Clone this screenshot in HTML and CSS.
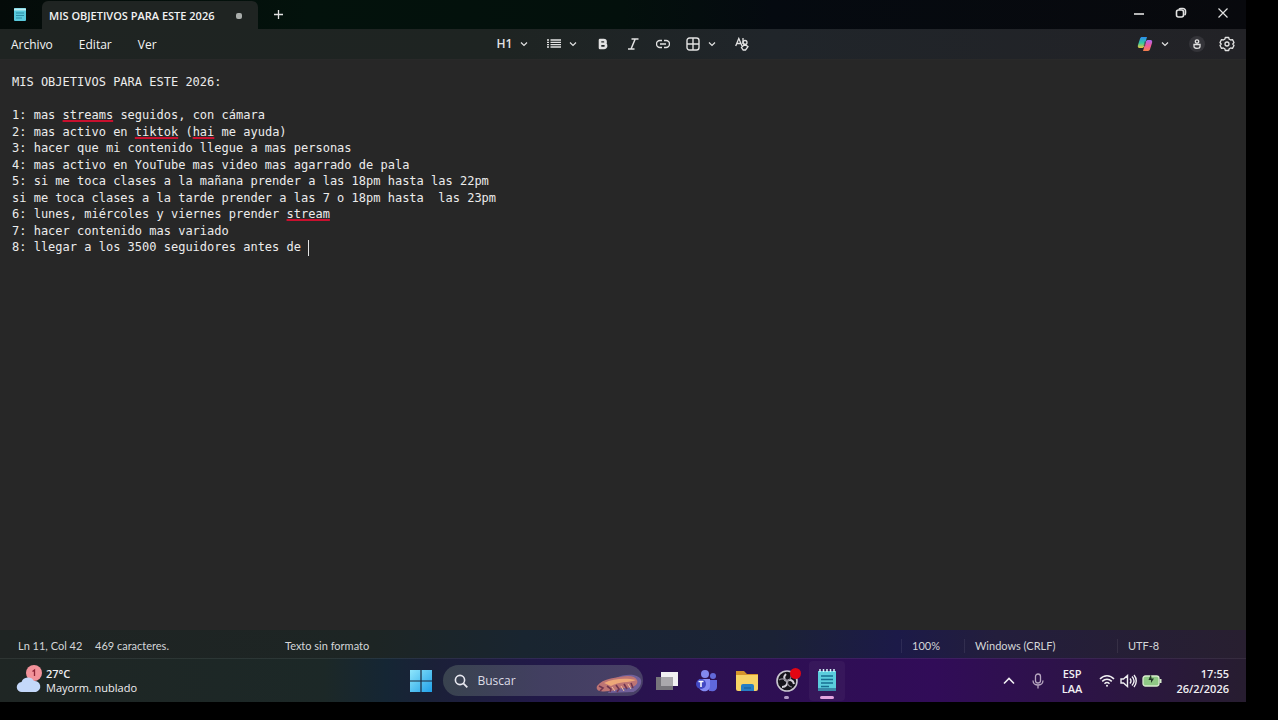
FILE: index.html
```html
<!DOCTYPE html>
<html lang="es">
<head>
<meta charset="utf-8">
<meta name="viewport" content="width=device-width, initial-scale=1">
<title>MIS OBJETIVOS PARA ESTE 2026</title>
<link rel="stylesheet" href="styles.css">
</head>
<body>
<svg class="defs" aria-hidden="true">
  <symbol id="chevron" viewBox="0 0 8 8"><path d="M1 2.5 4 5.5 7 2.5" fill="none" stroke="currentColor" stroke-width="1.200"/></symbol>
  <linearGradient id="win" x1="0" y1="0" x2="1" y2="1"><stop offset="0" stop-color="#8fe6fb"/><stop offset="1" stop-color="#1fa0e8"/></linearGradient>
  <linearGradient id="copilotA" x1="0" y1="0" x2="0" y2="1"><stop offset="0" stop-color="#2b8cf0"/><stop offset=".55" stop-color="#35c9a0"/><stop offset="1" stop-color="#f0c63c"/></linearGradient>
  <linearGradient id="copilotB" x1="0" y1="0" x2="0" y2="1"><stop offset="0" stop-color="#a968f0"/><stop offset=".5" stop-color="#f05a9c"/><stop offset="1" stop-color="#f4804a"/></linearGradient>
</svg>

<main class="window">
  <header class="titlebar">
    <svg class="app-icon" width="14" height="16" viewBox="0 0 14 16"><rect x="1" y="1" width="12" height="13" rx="1" fill="#59c9dc"/><path d="M1 1.500h12v2H1z" fill="#b9eef5"/><path d="M3 6h8M3 8.500h8M3 11h6" stroke="#2c8da6"/></svg>
    <div class="tab"><span>MIS OBJETIVOS PARA ESTE 2026</span><i class="unsaved"></i></div>
    <button class="icon-btn new-tab" aria-label="Nueva pestaña"><svg width="11" height="11" viewBox="0 0 11 11"><path d="M5.500 1v9M1 5.500h9" stroke="currentColor" stroke-width="1.300"/></svg></button>
    <div class="caption">
      <button class="icon-btn" aria-label="Minimizar"><svg width="12" height="12" viewBox="0 0 12 12"><path d="M1 7h10" stroke="currentColor" stroke-width="1.600"/></svg></button>
      <button class="icon-btn" aria-label="Restaurar"><svg width="12" height="12" viewBox="0 0 12 12" fill="none" stroke="currentColor" stroke-width="1.600"><rect x="1.500" y="3" width="7" height="7" rx="2"/><path d="M4 2.500C4.500 1.600 5 1.500 6 1.500h2A2.500 2.500 0 0 1 10.500 4v2c0 1-.1 1.500-1 2"/></svg></button>
      <button class="icon-btn" aria-label="Cerrar"><svg width="12" height="12" viewBox="0 0 12 12"><path d="M1.500 1.500l9 9M10.500 1.500l-9 9" stroke="currentColor" stroke-width="1.200"/></svg></button>
    </div>
  </header>

  <nav class="menubar">
    <div class="menus">
      <button>Archivo</button><button>Editar</button><button>Ver</button>
    </div>
    <div class="tools">
      <button class="split" aria-label="Encabezados"><span class="h1">H1</span><svg width="8" height="8"><use href="#chevron"/></svg></button>
      <button class="split" aria-label="Listas"><svg width="14" height="12" viewBox="0 0 14 12"><path d="M0 2h2M0 4.300h2M0 6.700h2M0 9h2M3.500 2H14M3.500 4.300H14M3.500 6.700H14M3.500 9H14" stroke="currentColor" stroke-width="1.300"/></svg><svg width="8" height="8"><use href="#chevron"/></svg></button>
      <button aria-label="Negrita"><svg width="14" height="14" viewBox="0 0 14 14"><path d="M4 3v8h4a2.100 2.100 0 0 0 0-4.200H4h3.700a1.900 1.900 0 0 0 0-3.800z" fill="none" stroke="currentColor" stroke-width="2.600" stroke-linejoin="round"/></svg></button>
      <button aria-label="Cursiva"><svg width="14" height="14" viewBox="0 0 14 14"><path d="M5.500 2H12.500M2 12h6.500M9.200 2 5 12" fill="none" stroke="currentColor" stroke-width="1.500"/></svg></button>
      <button aria-label="Vínculo"><svg width="14" height="10" viewBox="0 0 14 10"><path d="M6 1.500H4a3.500 3.500 0 0 0 0 7h2M8 1.500h2a3.500 3.500 0 0 1 0 7H8M4 5h6" fill="none" stroke="currentColor" stroke-width="1.400"/></svg></button>
      <button class="split" aria-label="Tabla"><svg width="14" height="14" viewBox="0 0 14 14"><rect x="1" y="1" width="12" height="12" rx="2.500" fill="none" stroke="currentColor" stroke-width="1.400"/><path d="M7 1v12M1 7h12" stroke="currentColor" stroke-width="1.400"/></svg><svg width="8" height="8"><use href="#chevron"/></svg></button>
      <button aria-label="Borrar formato"><svg width="14" height="14" viewBox="0 0 14 14" fill="none" stroke="currentColor" stroke-width="1.300"><path d="M.7 9 3.800 1.500 7 9M2 6.500h4M8 1v6"/><circle cx="10" cy="5.500" r="2"/><path d="m6.500 10.500 3.200-3.300 3.300 2.500-2.500 3.300H8.200z"/></svg></button>
    </div>
    <div class="right-tools">
      <button class="split" aria-label="Copilot"><svg width="16" height="16" viewBox="0 0 16 16"><path d="M5 1h5L7.500 9.500C7 11.500 6 12 4.500 12H2.600C.8 12 .5 10.500 1 9L3 2.700C3.400 1.500 4 1 5 1z" fill="url(#copilotA)"/><path d="M11 15H6l2.500-8.500C9 4.500 10 4 11.500 4h1.900c1.800 0 2.100 1.500 1.600 3l-2 6.300c-.4 1.200-1 1.700-2 1.700z" fill="url(#copilotB)"/><path d="M7.500 5.500H9L8.200 10H6.500z" fill="#272a33" opacity=".5"/></svg><svg width="8" height="8"><use href="#chevron"/></svg></button>
      <button class="account" aria-label="Cuenta"><svg width="10" height="12" viewBox="0 0 10 12" fill="none" stroke="currentColor" stroke-width="1.300"><circle cx="5" cy="3.500" r="1.700"/><path d="M2 6.500h6v2c0 2.500-6 2.500-6 0z"/></svg></button>
      <button aria-label="Configuración"><svg width="16" height="16" viewBox="0 0 16 16" fill="none" stroke="currentColor" stroke-width="1.300" stroke-linejoin="round"><path d="m6.300 1.500-.5 1.700-1.500.8-1.800-.4L1 6.500 2.200 8 1 9.500l1.500 2.900 1.800-.4 1.500.8.500 1.700h3.400l.5-1.700 1.500-.8 1.800.4L15 9.500 13.800 8 15 6.500l-1.500-2.900-1.800.4-1.500-.8-.5-1.700z"/><circle cx="8" cy="8" r="2"/></svg></button>
    </div>
  </nav>

  <section class="editor" contenteditable="true" role="textbox" aria-multiline="true" aria-label="Editor de texto" spellcheck="false">
    <p>MIS OBJETIVOS PARA ESTE 2026:</p>
    <p><br></p>
    <p>1: mas <span class="typo">streams</span> seguidos, con cámara</p>
    <p>2: mas activo en <span class="typo">tiktok</span> (<span class="typo">hai</span> me ayuda)</p>
    <p>3: hacer que mi contenido llegue a mas personas</p>
    <p>4: mas activo en YouTube mas video mas agarrado de pala</p>
    <p>5: si me toca clases a la mañana prender a las 18pm hasta las 22pm</p>
    <p>si me toca clases a la tarde prender a las 7 o 18pm hasta  las 23pm</p>
    <p>6: lunes, miércoles y viernes prender <span class="typo">stream</span></p>
    <p>7: hacer contenido mas variado</p>
    <p>8: llegar a los 3500 seguidores antes de <span class="cursor"></span></p>
  </section>

  <footer class="status">
    <span class="position">Ln 11, Col 42</span>
    <span class="count">469 caracteres.</span>
    <span class="format">Texto sin formato</span>
    <span class="cell zoom">100%</span>
    <span class="cell eol">Windows (CRLF)</span>
    <span class="cell encoding">UTF-8</span>
  </footer>
</main>

<footer class="taskbar">
  <button class="weather">
    <svg width="28" height="30" viewBox="0 0 28 30"><circle cx="19" cy="9" r="8" fill="#f2929a"/><path d="M7 28a5 5 0 0 1-.5-10A7 7 0 0 1 19 17a5.600 5.600 0 0 1 2 11z" fill="#c4d8fa"/><path d="M17.500 7.500 19.500 6v6" fill="none" stroke="#8d2436" stroke-width="1.300"/></svg>
    <span><b>27°C</b>Mayorm. nublado</span>
  </button>
  <div class="apps">
    <button class="app" aria-label="Inicio"><svg width="22" height="22" viewBox="0 0 22 22" fill="url(#win)"><path d="M0 0h10.400v10.400H0zM11.600 0H22v10.400H11.600zM0 11.600h10.400V22H0zM11.600 11.600H22V22H11.600z"/></svg></button>
    <label class="search">
      <svg width="14" height="14" viewBox="0 0 14 14"><circle cx="6" cy="6" r="4.600" fill="none" stroke="#e8e8f0" stroke-width="1.600"/><path d="m9.300 9.300 4 4" stroke="#e8e8f0" stroke-width="1.800"/></svg>
      <input type="text" placeholder="Buscar" aria-label="Buscar">
      <svg width="46" height="20" viewBox="0 0 46 20"><path d="M20 4C28 0 42-1 45 6c1 5-3 10-8 12L12 19z" fill="#71609a"/><path d="M1 12C8 4 18 4 24 3c9-2 15-1 17 3 2 5-4 8-12 8-7 0-9 3-15 3C7 18-1 18 1 12z" fill="#bd7474"/><path d="M8 9C18 4 31 4 40 6c-7 3-17 1-25 6z" fill="#eda878"/><path d="M3 12l4 2-3 3M11 12l4 3-1 3M20 11l3 4-2 3M28 10l3 5M35 9l2 5" stroke="#6f3650" stroke-width="1.600" fill="none"/><path d="M16 13l3 4M25 12l3 5M32 10l3 5" stroke="#f0bd9e" fill="none"/></svg>
    </label>
    <button class="app" aria-label="Vista de tareas"><svg width="24" height="22" viewBox="0 0 24 22"><path d="M1 7h17v13H1z" fill="#77757b"/><path d="M6 2h17v14H6z" fill="#f1f0f2"/><path d="M6 7h12v9H6z" fill="#aaa8ac"/></svg></button>
    <button class="app" aria-label="Teams"><svg width="24" height="24" viewBox="0 0 24 24"><circle cx="10" cy="5" r="4" fill="#8288ee"/><circle cx="18" cy="7" r="3" fill="#6269d8"/><path d="M14 11h8v7c0 3-3 5-6 4h-2z" fill="#6068dc"/><path d="M4 10h11v7c0 7-11 7-11 0z" fill="#858cf4"/><circle cx="6" cy="15" r="5" fill="#4148c2"/><path d="M3.500 12.500h5M6 12.500V18" stroke="#fff" stroke-width="1.500"/></svg></button>
    <button class="app" aria-label="Explorador de archivos"><svg width="24" height="22" viewBox="0 0 24 22"><path d="M1 1h8l3 3h11v8H1z" fill="#d6952b"/><path d="M1 5h22v14a2 2 0 0 1-2 2H3a2 2 0 0 1-2-2z" fill="#f7d365"/><path d="M6 21v-5a2 2 0 0 1 2-2h9a2 2 0 0 1 2 2v5z" fill="#267ec4"/><path d="M9 18h7" stroke="#145892"/></svg></button>
    <button class="app running" aria-label="OBS Studio"><svg width="28" height="26" viewBox="0 0 28 26"><circle cx="14" cy="13" r="10" fill="#15131b" stroke="#c9c6d1" stroke-width="1.600"/><path d="M14 13c-3-1-4-4-1-7M14 13c3-2 6-1 7 3M14 13c1 3-1 6-5 6" fill="none" stroke="#d4d1da" stroke-width="2"/><path d="M6 12c3-2 6-1 8 1M18 6c1 3-1 6-4 7M19 19c-3 0-5-3-5-6" fill="none" stroke="#8c8894" stroke-width="1.200"/><circle cx="22.500" cy="5.500" r="5.500" fill="#e30613"/></svg></button>
    <button class="app running active" aria-label="Bloc de notas"><svg width="20" height="24" viewBox="0 0 20 24"><path d="M1 2h18v19a1 1 0 0 1-1 1H2a1 1 0 0 1-1-1z" fill="#5bcddd"/><path d="M1 19h18v3H1z" fill="#398aa9"/><path d="M3 0v3M6.500 0v3M10 0v3M13.500 0v3M17 0v3" stroke="#d7f6fa" stroke-width="1.500"/><path d="M4 7h12M4 10.500h12M4 14h12M4 17.500h8" stroke="#176f91" stroke-width="1.500"/></svg></button>
  </div>
  <div class="tray">
    <button aria-label="Iconos ocultos"><svg width="12" height="8" viewBox="0 0 12 8"><path d="m1 6.500 5-5 5 5" fill="none" stroke="currentColor" stroke-width="1.600"/></svg></button>
    <button class="mic" aria-label="Micrófono"><svg width="12" height="16" viewBox="0 0 12 16" fill="none" stroke="currentColor" stroke-width="1.300"><rect x="3.500" y="1" width="5" height="9" rx="2.500"/><path d="M1 7.500c0 6 10 6 10 0M6 12v3.500"/></svg></button>
    <button class="lang">ESP<br>LAA</button>
    <button class="system" aria-label="Red, volumen y batería">
      <svg width="16" height="14" viewBox="0 0 16 14" fill="none" stroke="currentColor" stroke-width="1.500"><path d="M1 5c4-4.500 10-4.500 14 0M3.200 7.400c3-3 6.600-3 9.600 0M5.500 9.700c1.600-1.600 3.400-1.600 5 0"/><circle cx="8" cy="11.800" r="1" fill="currentColor" stroke="none"/></svg>
      <svg width="17" height="14" viewBox="0 0 17 14" fill="none" stroke="currentColor" stroke-width="1.400"><path d="M1 5h2.500L7.500 1.500v11L3.500 9H1zM10 4.500c1.300 1.600 1.300 3.400 0 5M12 2.500c2.500 2.700 2.500 6.300 0 9M14 1c3 3.500 3 8.500 0 12"/></svg>
      <svg width="20" height="14" viewBox="0 0 20 14"><rect x="1" y="2" width="16" height="10" rx="2.500" fill="#8fc985" stroke="#d8edce" stroke-width="1.300"/><path d="M18.500 5v4" stroke="#d8edce" stroke-width="2"/><path d="M9 0 6.500 6H9v3l3-4.500H9.500z" fill="#223a26"/></svg>
    </button>
    <button class="clock">17:55<br>26/2/2026</button>
  </div>
</footer>
</body>
</html>
```
FILE: styles.css
```css
* { box-sizing: border-box; }

body {
  margin: 0;
  padding: 0 32px 18px 0;
  height: 100vh;
  display: flex;
  flex-direction: column;
  background: #000;
  color: #e2e2e2;
  font: 11px/14px "Open Sans", "Noto Sans", sans-serif;
}

button {
  display: flex;
  align-items: center;
  justify-content: center;
  margin: 0;
  padding: 0;
  border: 0;
  background: none;
  color: inherit;
  font: inherit;
}

svg { display: block; flex: none; }
.defs { position: absolute; width: 0; height: 0; }

.window {
  flex: 1;
  min-height: 0;
  display: flex;
  flex-direction: column;
  background: #272727;
}

/* Title bar */
.titlebar {
  display: flex;
  align-items: center;
  height: 29px;
  padding-left: 13px;
  background: linear-gradient(90deg, #040b09, #03120c 25%, #03100c 50%, #050a10 62%, #08090d);
}

.tab {
  align-self: flex-end;
  display: flex;
  align-items: center;
  gap: 22px;
  height: 28px;
  margin-left: 15px;
  padding: 2px 16px 0 7px;
  border-radius: 6px 6px 0 0;
  background: #1f2422;
  color: #f2f2f2;
  font-weight: 600;
}

.unsaved {
  width: 6px;
  height: 6px;
  border-radius: 2px;
  background: #a9adab;
}

.icon-btn { width: 42px; height: 28px; }
.new-tab { width: 40px; }
.caption { display: flex; align-self: flex-start; margin-left: auto; padding-right: 2px; }
.caption .icon-btn { height: 26px; }

/* Menus and formatting tools */
.menubar {
  display: grid;
  grid-template-columns: 1fr auto 1fr;
  align-items: center;
  height: 31px;
  border-bottom: 1px solid #292929;
  background: linear-gradient(90deg, #1f2422, #1e2422 40%, #20252a 62%, #222226);
}

.menus {
  display: flex;
  gap: 26px;
  padding: 2px 0 0 11px;
  color: #f4f4f4;
  font-size: 12px;
}

.tools, .right-tools { display: flex; align-items: center; }
.tools { gap: 16px; }
.right-tools { justify-content: flex-end; gap: 14px; padding-right: 11px; }
.split { gap: 8px; }
.tools .split { margin-right: 3px; }
.right-tools .split { margin-right: 6px; }
.h1 { font-size: 12px; font-weight: 600; }
.account {
  width: 16px;
  height: 16px;
  border-radius: 50%;
  background: #343439;
}

/* Text area */
.editor {
  flex: 1;
  min-height: 0;
  display: flex;
  flex-direction: column;
  padding: 14px 12px;
  overflow: hidden;
  outline: 0;
  color: #ececec;
  font: 12px/16px "DejaVu Sans Mono", "Liberation Mono", monospace;
  white-space: pre-wrap;
}

.editor p { margin: 0; }
.editor p:nth-child(odd) { line-height: 17px; }

.typo {
  text-decoration: underline 2px #c8102e;
  text-underline-offset: 1px;
  text-decoration-skip-ink: none;
}

.cursor {
  display: inline-block;
  width: 1px;
  height: 16px;
  background: #e4e4e4;
  vertical-align: middle;
}

/* Status bar */
.status {
  display: flex;
  align-items: center;
  height: 28px;
  padding: 3px 0 0 18px;
  background: linear-gradient(90deg, #1f2423, #1d2524 30%, #192530 42%, #1b2235 62%, #1c1a48 72%, #231e3c 80%, #281f30);
  color: #d4d6d8;
  font-family: Lato, "Open Sans", sans-serif;
}

.position { width: 77px; }
.count { flex: 1 0 auto; max-width: 190px; }
.cell {
  padding-left: 10px;
  border-left: 1px solid #ffffff14;
}
.zoom { width: 63px; margin-left: auto; }
.eol { width: 153px; }
.encoding { width: 129px; }

/* Taskbar */
.taskbar {
  display: grid;
  grid-template-columns: 1fr auto 1fr;
  align-items: center;
  height: 44px;
  border-top: 1px solid #ffffff12;
  background: linear-gradient(90deg, #1f2624, #1c2827 26%, #152634 31%, #1b2038 35%, #22184a 44%, #2c1151 55%, #310c58 75%, #2d1348 86%, #271d30);
  color: #f0eff2;
}

.weather {
  justify-content: flex-start;
  padding-left: 15px;
  gap: 3px;
  text-align: left;
}
.weather svg { margin-bottom: 4px; }
.weather b { display: block; font-weight: 600; }

.apps { display: flex; align-items: center; padding-right: 3px; }
.app { position: relative; width: 40px; height: 40px; }
.app:first-child { width: 44px; }
.search + .app { margin-left: 4px; }
.running::after {
  content: "";
  position: absolute;
  bottom: 2px;
  width: 5px;
  height: 3px;
  border-radius: 2px;
  background: #b19bc6;
}
.app.active { width: 36px; margin-left: 2px; border-radius: 4px; background: #ffffff0a; }
.app.active::after { width: 14px; background: #e3a4df; }

.search {
  display: flex;
  align-items: center;
  gap: 10px;
  width: 200px;
  height: 31px;
  padding: 0 1px 0 11px;
  border-radius: 16px;
  background: linear-gradient(90deg, #39434f, #423f61 50%, #494067);
}
.search > svg:last-child { margin-top: 7px; }
.search input {
  flex: 1;
  min-width: 0;
  padding: 0;
  border: 0;
  outline: 0;
  background: none;
  color: #e4e2ec;
  font: 12px/16px "Open Sans", "Noto Sans", sans-serif;
}
.search input::placeholder { color: #dcdbe5; opacity: 1; }

.tray { display: flex; align-items: center; justify-content: flex-end; padding-right: 17px; font-weight: 600; }
.mic { margin-left: 17px; color: #b7a7c0; }
.lang { margin-left: 18px; line-height: 15px; }
.system { gap: 5px; margin-left: 17px; }
.clock { margin-left: 14px; line-height: 15px; text-align: right; }
```
